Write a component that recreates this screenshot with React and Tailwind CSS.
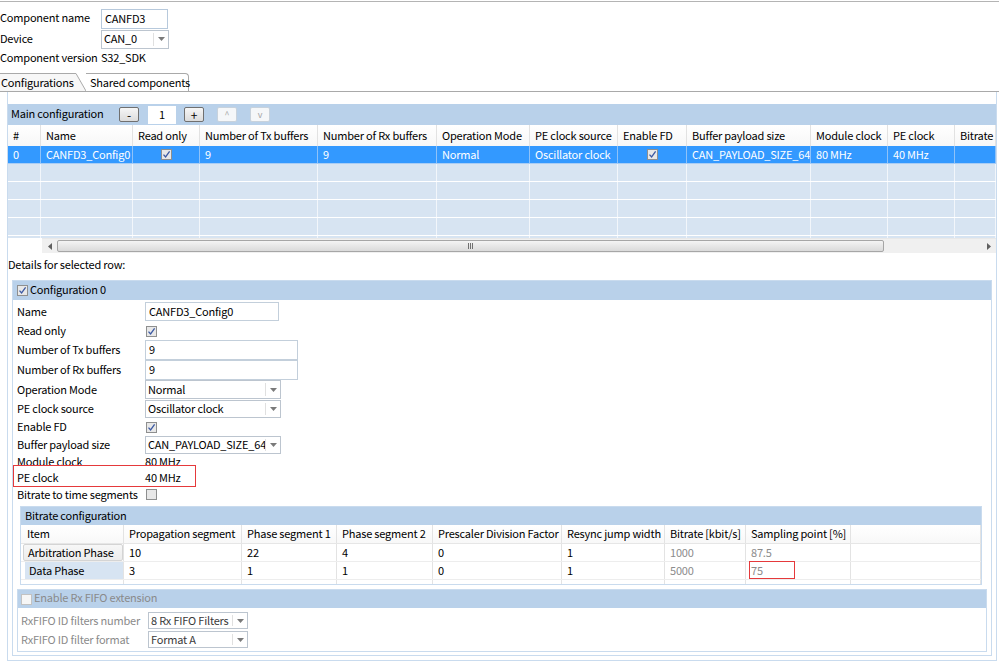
import React from "react";

function Check({ checked = true, disabled = false }) {
  return (
    <span
      className={
        disabled
          ? "inline-flex w-[11px] h-[11px] shrink-0 items-center justify-center border border-[#c2c2c2] bg-[#f6f6f6]"
          : "inline-flex w-[11px] h-[11px] shrink-0 items-center justify-center border border-[#8e8f8f] bg-[#e8e8e8]"
      }
    >
      {checked && (
        <svg width="9" height="9" viewBox="0 0 9 9">
          <path d="M1.5 4.6 L3.6 7 L7.6 1.4" fill="none" stroke="#3d5aa3" strokeWidth="1.3" />
        </svg>
      )}
    </span>
  );
}

function Arrow() {
  return (
    <svg width="7" height="4" viewBox="0 0 7 4">
      <path d="M0 0 L7 0 L3.5 4Z" fill="#7a7a7a" />
    </svg>
  );
}

function Select({ w, h, value, dim = false }) {
  return (
    <div className={`${w} ${h} flex border border-[#bcc5cf] bg-white`}>
      <div className={dim ? "flex-1 flex items-center pl-[2px] pb-[2px] text-[#3a3a3a] overflow-hidden" : "flex-1 flex items-center pl-[2px] pb-[2px] overflow-hidden"}>{value}</div>
      <div className="w-[15px] shrink-0 my-[2px] border-l border-[#e0e0e0] flex items-center justify-center">
        <Arrow />
      </div>
    </div>
  );
}

const mainCols = [
  "w-[33px]", "w-[92px]", "w-[67px]", "w-[118px]", "w-[119px]", "w-[93px]",
  "w-[88px]", "w-[69px]", "w-[124px]", "w-[77px]", "w-[67px]", "flex-1",
];
const mainHead = [
  "#", "Name", "Read only", "Number of Tx buffers", "Number of Rx buffers", "Operation Mode",
  "PE clock source", "Enable FD", "Buffer payload size", "Module clock", "PE clock", "Bitrate",
];
const mainRow = [
  "0", "CANFD3_Config0", "CHECK", "9", "9", "Normal", "Oscillator clock", "CHECK",
  "CAN_PAYLOAD_SIZE_64", "80 MHz", "40 MHz", "",
];

const brCols = [
  "w-[103px]", "w-[118px]", "w-[95px]", "w-[96px]", "w-[129px]", "w-[103px]", "w-[81px]", "w-[105px]", "flex-1",
];
const brHead = [
  "Item", "Propagation segment", "Phase segment 1", "Phase segment 2", "Prescaler Division Factor",
  "Resync jump width", "Bitrate [kbit/s]", "Sampling point [%]", "",
];
const brRows = [
  ["Arbitration Phase", "10", "22", "4", "0", "1", "1000", "87.5", ""],
  ["Data Phase", "3", "1", "1", "0", "1", "5000", "75", ""],
];

function SmallBtn({ label, disabled = false }) {
  return (
    <div
      className={
        disabled
          ? "w-[20px] h-[15px] flex items-center justify-center rounded-[2px] border border-[#c8d2dc] bg-[#f5f7f9] text-[#a8a8a8] text-[9px] leading-none"
          : "w-[20px] h-[15px] flex items-center justify-center rounded-[2px] border border-[#707070] bg-gradient-to-b from-[#f6f6f6] to-[#dcdcdc] text-[12px] leading-none"
      }
    >
      {label}
    </div>
  );
}

function FormRow({ h, label, children }) {
  return (
    <div className={`${h} flex items-center`}>
      <div className="w-[128px] shrink-0 pb-[2px]">{label}</div>
      {children}
    </div>
  );
}

export default function App() {
  return (
    <div className="relative w-[999px] h-[664px] overflow-hidden bg-white text-[11px] leading-[14px] tracking-[-0.2px] text-black whitespace-nowrap font-['Noto_Sans_CJK_SC','Microsoft_YaHei',sans-serif]">
      {/* top line */}
      <div className="h-[2px] border-b border-[#b4b4b4]" />

      {/* component form */}
      <div className="mt-[6px] flex flex-col">
        <div className="h-[21px] flex items-center">
          <div className="w-[101px] pb-[3px]">Component name</div>
          <div className="w-[67px] h-[20px] border border-[#b7c9dc] flex items-center pl-[3px] pb-[2px]">CANFD3</div>
        </div>
        <div className="h-[20px] flex items-center">
          <div className="w-[101px] pb-[3px]">Device</div>
          <Select w="w-[68px]" h="h-[19px]" value="CAN_0" />
        </div>
        <div className="h-[18px] flex items-center">
          <div className="w-[101px] pb-[3px]">Component version</div>
          <div className="pb-[3px]">S32_SDK</div>
        </div>
      </div>

      {/* tabs */}
      <div className="mt-[6px] h-[19px] flex border-b border-[#a9a9a9]">
        <div className="w-[75px] border-t border-[#a9a9a9] bg-[#f7f7f7] flex items-center pl-[1px] pb-[2px]">Configurations</div>
        <svg width="11" height="18" viewBox="0 0 11 18" className="shrink-0">
          <path d="M0 0.5 L1 0.5 L11 18 L0 18Z" fill="#f7f7f7" />
          <path d="M0 0.5 L1 0.5 L11 18" fill="none" stroke="#a9a9a9" strokeWidth="1" />
        </svg>
        <div className="w-[103px] border-t border-r border-[#a9a9a9] rounded-tr-[4px] flex items-center pl-[4px] pb-[2px]">Shared components</div>
      </div>

      {/* panel */}
      <div className="ml-[7px] w-[990px] h-[569px] border-l border-r border-b border-[#c9dbee] pt-[12px] flex flex-col">
        {/* main configuration table */}
        <div className="h-[21px] bg-[#b9d1ea] flex items-center">
          <div className="w-[111px] pl-[3px] pb-[4px]">Main configuration</div>
          <SmallBtn label="-" />
          <div className="ml-[9px] w-[28px] h-[18px] bg-white flex items-center justify-center pb-[2px]">1</div>
          <div className="ml-[8px]"><SmallBtn label="+" /></div>
          <div className="ml-[13px]"><SmallBtn label="^" disabled /></div>
          <div className="ml-[13px]"><SmallBtn label="v" disabled /></div>
        </div>
        <div className="h-[21px] flex bg-gradient-to-b from-white to-[#f7f7f7]">
          {mainHead.map((t, i) => (
            <div key={i} className={`${mainCols[i]} shrink-0 border-r border-[#e2e2e2] flex items-center pl-[5px] pb-[1px] overflow-hidden`}>
              {t}
            </div>
          ))}
        </div>
        <div className="h-[18px] flex bg-[#3399ff] text-white border-b border-[#a9cdf5]">
          {mainRow.map((t, i) => (
            <div key={i} className={`${mainCols[i]} shrink-0 border-r border-[#8fc2f8] flex items-center overflow-hidden ${t === "CHECK" ? "justify-center" : "pl-[5px] pb-[1px]"}`}>
              {t === "CHECK" ? <Check /> : t}
            </div>
          ))}
        </div>
        {[0, 1, 2, 3].map((r) => (
          <div key={r} className="h-[18px] flex bg-[#d7e4f2] border-b border-white">
            {mainCols.map((c, i) => (
              <div key={i} className={`${c} shrink-0 border-r border-[#f2f6fb]`} />
            ))}
          </div>
        ))}
        <div className="h-[2px] flex bg-[#d7e4f2]">
          {mainCols.map((c, i) => (
            <div key={i} className={`${c} shrink-0 border-r border-[#f2f6fb]`} />
          ))}
        </div>
        {/* scrollbar */}
        <div className="h-[15px] flex bg-white">
          <div className="w-[34px]" />
          <div className="flex-1 flex bg-[#f0f0f0] border-t border-[#e8e8e8]">
            <div className="w-[15px] flex items-center justify-center">
              <svg width="4" height="7" viewBox="0 0 4 7"><path d="M4 0 L4 7 L0 3.5Z" fill="#606060" /></svg>
            </div>
            <div className="w-[827px] my-[1px] rounded-[2px] border border-[#a6a6a6] bg-gradient-to-b from-[#f4f4f4] to-[#dadada] flex items-center justify-center">
              <div className="flex gap-[1px]">
                <div className="w-[1px] h-[6px] bg-[#707070]" />
                <div className="w-[1px] h-[6px] bg-[#707070]" />
                <div className="w-[1px] h-[6px] bg-[#707070]" />
              </div>
            </div>
            <div className="flex-1" />
            <div className="w-[15px] flex items-center justify-center">
              <svg width="4" height="7" viewBox="0 0 4 7"><path d="M0 0 L0 7 L4 3.5Z" fill="#606060" /></svg>
            </div>
          </div>
        </div>

        <div className="h-[25px] flex items-center pb-[4px]">Details for selected row:</div>

        {/* Configuration 0 group */}
        <div className="mt-[2px] ml-[4px] w-[980px] border border-[#c9dbee] pb-[3px]">
          <div className="h-[19px] bg-[#b9d1ea] flex items-center pl-[4px] gap-[2px]">
            <Check />
            <span className="pb-[4px]">Configuration 0</span>
          </div>
          <div className="pt-[1px] pl-[4px] flex flex-col">
            <FormRow h="h-[21px]" label="Name">
              <div className="w-[134px] h-[19px] border border-[#c3cfdb] flex items-center pl-[3px] pb-[2px]">CANFD3_Config0</div>
            </FormRow>
            <FormRow h="h-[18px]" label="Read only">
              <div className="pl-[1px] flex"><Check /></div>
            </FormRow>
            <FormRow h="h-[20px]" label="Number of Tx buffers">
              <div className="w-[153px] h-[20px] border border-[#c3cfdb] flex items-center pl-[3px] pb-[2px]">9</div>
            </FormRow>
            <FormRow h="h-[20px]" label="Number of Rx buffers">
              <div className="w-[153px] h-[20px] border border-[#c3cfdb] flex items-center pl-[3px] pb-[2px]">9</div>
            </FormRow>
            <FormRow h="h-[19px]" label="Operation Mode">
              <Select w="w-[136px]" h="h-[19px]" value="Normal" />
            </FormRow>
            <FormRow h="h-[19px]" label="PE clock source">
              <Select w="w-[136px]" h="h-[18px]" value="Oscillator clock" />
            </FormRow>
            <FormRow h="h-[18px]" label="Enable FD">
              <div className="pl-[1px] flex"><Check /></div>
            </FormRow>
            <FormRow h="h-[18px]" label="Buffer payload size">
              <Select w="w-[136px]" h="h-[18px]" value="CAN_PAYLOAD_SIZE_64" />
            </FormRow>
            <FormRow h="h-[16px]" label="Module clock">
              <div className="pb-[2px]">80 MHz</div>
            </FormRow>
            <FormRow h="h-[16px]" label="PE clock">
              <div className="pb-[2px]">40 MHz</div>
            </FormRow>
            <FormRow h="h-[17px]" label="Bitrate to time segments">
              <div className="pl-[1px] flex"><Check checked={false} /></div>
            </FormRow>
          </div>

          {/* Bitrate configuration group */}
          <div className="mt-[3px] ml-[7px] w-[962px] border border-[#c9dbee]">
            <div className="h-[18px] bg-[#b9d1ea] flex items-center pl-[4px] pb-[3px]">Bitrate configuration</div>
            <div className="h-[19px] flex border-b border-[#e6e6e6] bg-gradient-to-b from-white to-[#f8f8f8]">
              {brHead.map((t, i) => (
                <div key={i} className={`${brCols[i]} shrink-0 border-r border-[#e3e3e3] flex items-center pb-[2px] overflow-hidden ${i === 0 ? "pl-[6px]" : "pl-[5px]"}`}>
                  {t}
                </div>
              ))}
            </div>
            {brRows.map((row, r) => (
              <div key={r} className="h-[18px] flex border-b border-[#ededed]">
                {row.map((t, i) => {
                  if (i === 0) {
                    return (
                      <div key={i} className={`${brCols[i]} shrink-0 border-r border-[#e3e3e3] flex pl-[2px]`}>
                        <div
                          className={
                            r === 0
                              ? "flex-1 flex items-center pl-[4px] pb-[2px] bg-gradient-to-b from-[#f7f7f7] to-[#ececec] border border-[#d4d4d4] rounded-[2px]"
                              : "flex-1 flex items-center pl-[4px] pb-[2px] ml-[2px] bg-[#d7e4f2]"
                          }
                        >
                          {t}
                        </div>
                      </div>
                    );
                  }
                  return (
                    <div key={i} className={`${brCols[i]} shrink-0 border-r border-[#e3e3e3] flex items-center pl-[5px] pb-[2px] ${i === 6 || i === 7 ? "text-[#8c8c8c]" : ""}`}>
                      {t}
                    </div>
                  );
                })}
              </div>
            ))}
            <div className="h-[4px] flex">
              {brCols.map((c, i) => (
                <div key={i} className={`${c} shrink-0 border-r border-[#e3e3e3]`} />
              ))}
            </div>
          </div>

          {/* Rx FIFO group */}
          <div className="mt-[4px] ml-[4px] w-[970px] border border-[#c9dbee] pb-[2px]">
            <div className="h-[18px] bg-[#b9d1ea] flex items-center pl-[3px] gap-[2px] text-[#8a8a8a]">
              <Check checked={false} disabled />
              <span className="pb-[4px]">Enable Rx FIFO extension</span>
            </div>
            <div className="pt-[3px] pl-[3px] flex flex-col text-[#8a8a8a]">
              <div className="h-[19px] flex items-center">
                <div className="w-[127px] pb-[2px]">RxFIFO ID filters number</div>
                <Select w="w-[100px]" h="h-[17px]" value="8 Rx FIFO Filters" dim />
              </div>
              <div className="h-[19px] flex items-center">
                <div className="w-[127px] pb-[2px]">RxFIFO ID filter format</div>
                <Select w="w-[100px]" h="h-[17px]" value="Format A" dim />
              </div>
            </div>
          </div>
        </div>
      </div>

      {/* red annotation boxes */}
      <div className="absolute left-[13px] top-[465px] w-[183px] h-[22px] border border-[#e5393b]" />
      <div className="absolute left-[749px] top-[561px] w-[46px] h-[18px] border border-[#e5393b]" />
    </div>
  );
}
